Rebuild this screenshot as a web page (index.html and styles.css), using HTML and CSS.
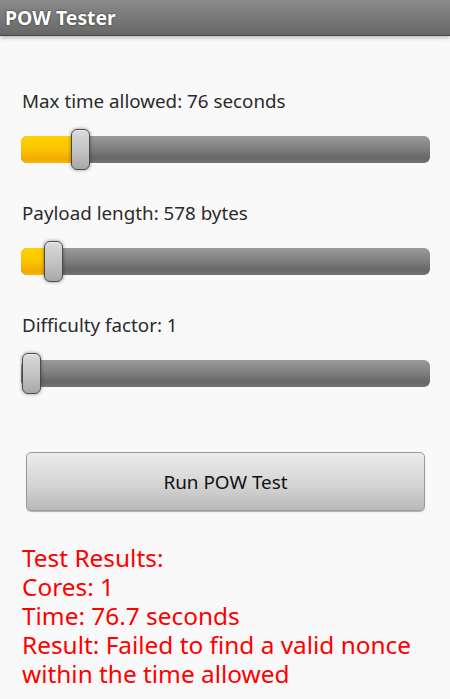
FILE: index.html
```html
<!DOCTYPE html>
<html>
<head>
<meta charset="utf-8">
<link rel="stylesheet" href="styles.css">
</head>
<body>
<header class="titlebar"><span class="title">POW Tester</span></header>
<main class="content">
  <section class="field">
    <div class="label">Max time allowed: 76 seconds</div>
    <div class="slider">
      <div class="track"><div class="fill" style="width:59px"></div></div>
      <div class="thumb" style="left:50px"></div>
    </div>
  </section>
  <section class="field">
    <div class="label">Payload length: 578 bytes</div>
    <div class="slider">
      <div class="track"><div class="fill" style="width:32px"></div></div>
      <div class="thumb" style="left:23px"></div>
    </div>
  </section>
  <section class="field">
    <div class="label">Difficulty factor: 1</div>
    <div class="slider">
      <div class="track"><div class="fill" style="width:0px"></div></div>
      <div class="thumb" style="left:1px"></div>
    </div>
  </section>
  <div class="actions"><button class="run">Run POW Test</button></div>
  <div class="results">
    <div>Test Results:</div>
    <div>Cores: 1</div>
    <div>Time: 76.7 seconds</div>
    <div>Result: Failed to find a valid nonce within the time allowed</div>
  </div>
</main>
</body>
</html>
```
FILE: styles.css
```css
html, body {
  margin: 0;
  padding: 0;
  background: #f9f9f9;
  font-family: "Noto Sans", "Open Sans", "DejaVu Sans", sans-serif;
  height: 699px;
  overflow: hidden;
}
.titlebar {
  height: 36px;
  box-sizing: border-box;
  background: linear-gradient(#8a8a8a, #676767);
  border-bottom: 1px solid #444;
  box-shadow: 0 2px 4px rgba(0,0,0,0.25);
  display: flex;
  align-items: center;
  padding-left: 5px;
}
.title {
  color: #ffffff;
  font-weight: bold;
  font-size: 19.4px;
  text-shadow: 0 0 2px rgba(0,0,0,0.7);
}
.content {
  padding: 53px 20px 0 21px;
}
.field {
  display: flex;
  flex-direction: column;
  gap: 16px;
  margin-bottom: 31px;
}
.label {
  font-size: 18.8px;
  line-height: 24px;
  color: #2a2a2a;
  padding-left: 1px;
}
.slider {
  position: relative;
  height: 41px;
  display: flex;
  align-items: center;
}
.track {
  flex: 1;
  height: 27px;
  border-radius: 6px;
  overflow: hidden;
  background: linear-gradient(#9a9a9a 0%, #848484 40%, #666 82%, #767676 100%);
}
.fill {
  height: 100%;
  background: linear-gradient(#ffd000 0%, #fcc400 50%, #f2a900 85%, #f7b800 100%);
}
.thumb {
  position: absolute;
  top: 0;
  width: 19px;
  height: 41px;
  box-sizing: border-box;
  border: 1px solid #4a4a4a;
  border-radius: 6px;
  background: linear-gradient(#dadada, #c4c4c4 50%, #a8a8a8);
  box-shadow: 0 0 3px 1px rgba(0,0,0,0.25), inset 0 1px 0 rgba(255,255,255,0.6);
}
.actions {
  padding: 27px 5px 0 5px;
}
.run {
  display: block;
  width: 100%;
  height: 59px;
  border: 1px solid #9a9a9a;
  border-radius: 5px;
  background: linear-gradient(#ececec, #d2d2d2 60%, #b8b8b8);
  font-family: "Noto Sans", "Open Sans", sans-serif;
  font-size: 18.9px;
  color: #111;
  box-shadow: 0 1px 1px rgba(0,0,0,0.3);
}
.results {
  margin-top: 32px;
  padding-left: 1px;
  color: #ff0000;
  font-size: 24.4px;
  line-height: 29px;
}
```
